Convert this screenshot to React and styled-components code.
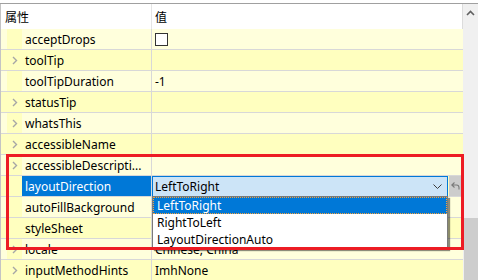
import React from "react";
import styled, { createGlobalStyle } from "styled-components";

const Global = createGlobalStyle`
  html, body { margin: 0; padding: 0; background: #fff; }
  body { font-family: "Noto Sans", "Noto Sans CJK SC", sans-serif; font-size: 12px; color: #000; }
  #root { width: 478px; height: 280px; }
`;

const Window = styled.div`
  position: relative;
  width: 478px;
  height: 280px;
  padding-top: 3px;
  box-sizing: border-box;
  overflow: hidden;
  background: #fff;
`;

const Frame = styled.div`
  display: flex;
  height: 277px;
  border-top: 1px solid #a0a0a0;
`;

const Tree = styled.div`
  width: 463px;
  display: flex;
  flex-direction: column;
  border-left: 1px solid #c4c4c4;
  box-sizing: border-box;
`;

const Header = styled.div`
  display: flex;
  height: 25px;
  flex-shrink: 0;
  background: #fff;
  border-right: 1px solid #dcdcdc;
`;

const HeaderCell = styled.div`
  display: flex;
  align-items: center;
  box-sizing: border-box;
  padding-left: ${p => p.$pad}px;
  width: ${p => (p.$w ? `${p.$w}px` : "auto")};
  flex: ${p => (p.$w ? "none" : 1)};
  border-right: ${p => (p.$w ? "1px solid #e5e5e5" : "none")};
  font-family: "Noto Sans CJK SC", sans-serif;
  font-size: 12px;
`;

const Row = styled.div`
  display: flex;
  height: 21px;
  flex-shrink: 0;
  box-sizing: border-box;
  border-bottom: 1px solid #d8d8d8;
  background: ${p => (p.$dark ? "#ffffbf" : "#ffffdc")};
`;

const NameCell = styled.div`
  display: flex;
  width: 151px;
  flex: none;
  box-sizing: border-box;
  border-right: 1px solid #d8d8d8;
`;

const Branch = styled.div`
  width: 15px;
  margin-left: 6px;
  background: #ffffbf;
  display: flex;
  align-items: center;
  justify-content: center;
`;

const Label = styled.div`
  flex: 1;
  display: flex;
  align-items: center;
  padding-left: 3px;
  background: ${p => (p.$sel ? "#0078d7" : "transparent")};
  color: ${p => (p.$sel ? "#fff" : "#000")};
  white-space: nowrap;
  overflow: hidden;
`;

const ValueCell = styled.div`
  flex: 1;
  display: flex;
  align-items: center;
  padding-left: ${p => (p.$editor ? 0 : 3)}px;
  white-space: nowrap;
  position: relative;
`;

const CheckBox = styled.div`
  width: 11px;
  height: 11px;
  border: 1px solid #333;
  background: #fff;
`;

const Combo = styled.div`
  position: relative;
  width: 296px;
  height: 21px;
  box-sizing: border-box;
  align-self: flex-start;
  background: #cce4f7;
  border: 1px solid #0078d7;
  display: flex;
  align-items: center;
  padding-left: 2px;
  z-index: 2;
`;

const ComboText = styled.span`
  flex: 1;
`;

const Chevron = styled.svg`
  margin-right: 5px;
`;

const ResetBtn = styled.div`
  width: 13px;
  height: 20px;
  margin-left: 1px;
  align-self: flex-start;
  background: #cccccc;
  display: flex;
  align-items: center;
  justify-content: center;
`;

const Popup = styled.div`
  position: absolute;
  left: -1px;
  top: 19px;
  width: 296px;
  box-sizing: border-box;
  background: #fff;
  border: 1px solid #7a7a7a;
  box-shadow: 2px 2px 1px rgba(0, 0, 0, 0.45);
  display: flex;
  flex-direction: column;
`;

const Item = styled.div`
  height: 17px;
  box-sizing: border-box;
  display: flex;
  align-items: center;
  padding-left: 3px;
  background: ${p => (p.$sel ? "#0078d7" : "#fff")};
  color: ${p => (p.$sel ? "#fff" : "#000")};
  border: 1px ${p => (p.$sel ? "dotted #f7a23a" : "solid transparent")};
`;

const ScrollBar = styled.div`
  width: 15px;
  flex: none;
  background: #f0f0f0;
  display: flex;
  flex-direction: column;
`;

const ScrollBtn = styled.div`
  height: 17px;
  display: flex;
  align-items: center;
  justify-content: center;
`;

const Track = styled.div`
  height: 197px;
`;

const Thumb = styled.div`
  flex: 1;
  margin-left: 1px;
  background: #cdcdcd;
`;

const Highlight = styled.div`
  position: absolute;
  left: 6px;
  top: 154px;
  width: 458px;
  height: 96px;
  box-sizing: border-box;
  border: 3px solid #ed1c24;
  pointer-events: none;
  z-index: 5;
`;

const Arrow = () => (
  <svg width="6" height="9" viewBox="0 0 6 9">
    <polyline points="1,1 4.5,4.5 1,8" fill="none" stroke="#a6a6a6" strokeWidth="1.4" />
  </svg>
);

const rows = [
  { name: "acceptDrops", value: "checkbox" },
  { name: "toolTip", kids: true },
  { name: "toolTipDuration", value: "-1" },
  { name: "statusTip", kids: true },
  { name: "whatsThis", kids: true },
  { name: "accessibleName", kids: true },
  { name: "accessibleDescripti...", kids: true },
  { name: "layoutDirection", combo: true },
  { name: "autoFillBackground" },
  { name: "styleSheet" },
  { name: "locale", kids: true, value: "Chinese, China" },
  { name: "inputMethodHints", kids: true, value: "ImhNone" },
];

export default function App() {
  return (
    <Window>
      <Global />
      <Frame>
        <Tree>
          <Header>
            <HeaderCell $w={151} $pad={4}>属性</HeaderCell>
            <HeaderCell $pad={3}>值</HeaderCell>
          </Header>
          {rows.map((r, i) => (
            <Row key={r.name} $dark={i % 2 === 1}>
              <NameCell>
                <Branch>{r.kids && <Arrow />}</Branch>
                <Label $sel={r.combo}>{r.name}</Label>
              </NameCell>
              <ValueCell $editor={r.combo}>
                {r.value === "checkbox" ? (
                  <CheckBox />
                ) : r.combo ? (
                  <>
                    <Combo>
                      <ComboText>LeftToRight</ComboText>
                      <Chevron width="9" height="6" viewBox="0 0 9 6">
                        <polyline points="0.5,0.5 4.5,4.5 8.5,0.5" fill="none" stroke="#3c3c3c" strokeWidth="1" />
                      </Chevron>
                      <Popup>
                        <Item $sel>LeftToRight</Item>
                        <Item>RightToLeft</Item>
                        <Item>LayoutDirectionAuto</Item>
                      </Popup>
                    </Combo>
                    <ResetBtn>
                      <svg width="9" height="8" viewBox="0 0 9 8">
                        <path d="M3.5 0.5 L0.8 3 L3.5 5.5 M1 3 H5.5 Q8 3 8 5.5 V7.5" fill="none" stroke="#7a7a7a" strokeWidth="1.1" />
                      </svg>
                    </ResetBtn>
                  </>
                ) : (
                  r.value
                )}
              </ValueCell>
            </Row>
          ))}
        </Tree>
        <ScrollBar>
          <ScrollBtn>
            <svg width="9" height="6" viewBox="0 0 9 6">
              <polyline points="1,5 4.5,1.5 8,5" fill="none" stroke="#606060" strokeWidth="1.6" />
            </svg>
          </ScrollBtn>
          <Track />
          <Thumb />
        </ScrollBar>
      </Frame>
      <Highlight />
    </Window>
  );
}
